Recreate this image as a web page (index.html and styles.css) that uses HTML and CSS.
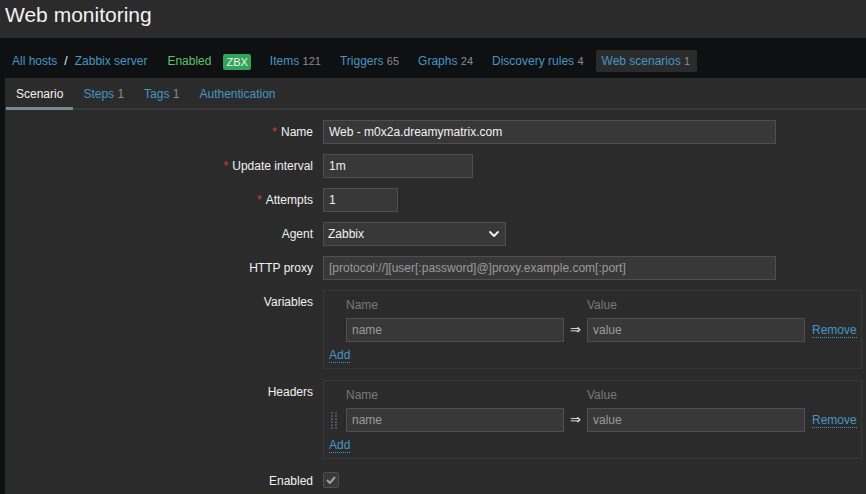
FILE: index.html
```html
<!DOCTYPE html>
<html lang="en">
<head>
<meta charset="utf-8">
<title>Web monitoring</title>
<link rel="stylesheet" href="styles.css">
</head>
<body>
<header class="page-header">
  <h1 class="page-title">Web monitoring</h1>
</header>
<nav class="host-nav">
  <ul class="host-nav-list">
    <li class="crumbs"><a class="link" href="#">All hosts</a><span class="crumb-sep">/</span><a class="link" href="#">Zabbix server</a></li>
    <li class="status">Enabled</li>
    <li class="badge-item"><span class="badge">ZBX</span></li>
    <li><a class="link" href="#">Items</a> <span class="count">121</span></li>
    <li><a class="link" href="#">Triggers</a> <span class="count">65</span></li>
    <li><a class="link" href="#">Graphs</a> <span class="count">24</span></li>
    <li><a class="link" href="#">Discovery rules</a> <span class="count">4</span></li>
    <li class="selected"><a class="link" href="#">Web scenarios</a> <span class="count">1</span></li>
  </ul>
</nav>
<main class="panel">
  <ul class="tabs">
    <li class="tab active"><span>Scenario</span></li>
    <li class="tab"><a class="link" href="#">Steps</a> <span class="count">1</span></li>
    <li class="tab"><a class="link" href="#">Tags</a> <span class="count">1</span></li>
    <li class="tab"><a class="link" href="#">Authentication</a></li>
  </ul>
  <form class="form">
    <label class="label required">Name</label>
    <div class="field"><input class="input w-wide" type="text" value="Web - m0x2a.dreamymatrix.com"></div>

    <label class="label required">Update interval</label>
    <div class="field"><input class="input w-mid" type="text" value="1m"></div>

    <label class="label required">Attempts</label>
    <div class="field"><input class="input w-small" type="text" value="1"></div>

    <label class="label">Agent</label>
    <div class="field">
      <div class="select">
        <span>Zabbix</span>
        <svg class="chevron" width="10" height="6" viewBox="0 0 10 6"><path d="M1 1 L5 5 L9 1" fill="none" stroke="#f2f2f2" stroke-width="1.8" stroke-linecap="round" stroke-linejoin="round"/></svg>
      </div>
    </div>

    <label class="label">HTTP proxy</label>
    <div class="field"><input class="input w-wide" type="text" placeholder="[protocol://][user[:password]@]proxy.example.com[:port]"></div>

    <label class="label top">Variables</label>
    <div class="field">
      <div class="pairs first">
        <div class="pairs-grid">
          <span></span><span class="col-head">Name</span><span></span><span class="col-head">Value</span><span></span>
          <span></span>
          <input class="input pair-input" type="text" placeholder="name">
          <span class="arrow">⇒</span>
          <input class="input pair-input" type="text" placeholder="value">
          <span class="remove-cell"><a class="link dotted" href="#">Remove</a></span>
        </div>
        <div class="add-row"><a class="link dotted" href="#">Add</a></div>
      </div>
    </div>

    <label class="label top">Headers</label>
    <div class="field">
      <div class="pairs">
        <div class="pairs-grid">
          <span></span><span class="col-head">Name</span><span></span><span class="col-head">Value</span><span></span>
          <span class="drag">
            <svg width="7" height="17" viewBox="0 0 7 17">
              <g fill="#4c565c">
                <rect x="0" y="0" width="2" height="2"/><rect x="4" y="0" width="2" height="2"/>
                <rect x="0" y="3" width="2" height="2"/><rect x="4" y="3" width="2" height="2"/>
                <rect x="0" y="6" width="2" height="2"/><rect x="4" y="6" width="2" height="2"/>
                <rect x="0" y="9" width="2" height="2"/><rect x="4" y="9" width="2" height="2"/>
                <rect x="0" y="12" width="2" height="2"/><rect x="4" y="12" width="2" height="2"/>
                <rect x="0" y="15" width="2" height="2"/><rect x="4" y="15" width="2" height="2"/>
              </g>
            </svg>
          </span>
          <input class="input pair-input" type="text" placeholder="name">
          <span class="arrow">⇒</span>
          <input class="input pair-input" type="text" placeholder="value">
          <span class="remove-cell"><a class="link dotted" href="#">Remove</a></span>
        </div>
        <div class="add-row"><a class="link dotted" href="#">Add</a></div>
      </div>
    </div>

    <label class="label">Enabled</label>
    <div class="field">
      <span class="checkbox">
        <svg width="10" height="8" viewBox="0 0 10 8"><path d="M1 4 L4 7 L9 1" fill="none" stroke="#9ba3a8" stroke-width="2"/></svg>
      </span>
    </div>
  </form>
</main>
</body>
</html>
```

FILE: styles.css
```css
* { box-sizing: border-box; }

html, body {
  margin: 0;
  padding: 0;
}

body {
  background: #0e1012;
  color: #f2f2f2;
  font-family: "Liberation Sans", Arial, sans-serif;
  font-size: 12px;
  line-height: 14px;
  overflow: hidden;
  height: 494px;
}

ul { list-style: none; margin: 0; padding: 0; }

.link {
  color: #4796c4;
  text-decoration: none;
}

.count {
  color: #8c8c8c;
}

/* Header */
.page-header {
  height: 38px;
  background: #2b2b2b;
  padding: 3px 0 0 5px;
}

.page-title {
  margin: 0;
  font-size: 21px;
  font-weight: normal;
  line-height: 24px;
  color: #f2f2f2;
}

/* Host navigation */
.host-nav {
  height: 40px;
  padding: 12px 0 6px 12px;
}

.host-nav-list {
  display: flex;
  align-items: center;
  height: 22px;
  line-height: 22px;
}

.host-nav-list li {
  margin-right: 19px;
  white-space: nowrap;
}

.host-nav-list .count {
  font-size: 11px;
}

.host-nav-list li.crumbs { margin-right: 20px; }
.host-nav-list li.status { margin-right: 12px; color: #5bc56a; }

.crumb-sep {
  color: #f2f2f2;
  margin: 0 7px;
}

.badge {
  display: inline-block;
  background: #2ea55a;
  color: #f2f2f2;
  font-size: 11px;
  line-height: 16px;
  height: 16px;
  padding: 0 3px;
  border-radius: 2px;
  vertical-align: middle;
}

.host-nav-list li.selected {
  background: #2b2b2b;
  padding: 0 7px 0 6px;
  margin-left: -7px;
  border-radius: 2px;
}

/* Panel */
.panel {
  margin-left: 5px;
  background: #2b2b2b;
  height: 416px;
}

.tabs {
  display: flex;
  height: 32px;
  box-shadow: inset 0 -2px 0 #383838;
  padding-left: 1px;
}

.tab {
  height: 32px;
  padding: 9px 10px 0;
  border-bottom: 3px solid transparent;
  white-space: nowrap;
}

.tab.active {
  border-bottom-color: #768d99;
  color: #f2f2f2;
}

/* Form */
.form {
  display: grid;
  grid-template-columns: 308px 1fr;
  column-gap: 10px;
  row-gap: 10px;
  padding-top: 10px;
}

.label {
  text-align: right;
  line-height: 24px;
  color: #f2f2f2;
}

.label.required::before {
  content: "*";
  color: #d3403b;
  margin-right: 4px;
}

.field {
  min-height: 24px;
}

.input {
  height: 24px;
  background: #383838;
  border: 1px solid #4f4f4f;
  color: #f2f2f2;
  font-family: "Liberation Sans", Arial, sans-serif;
  font-size: 12px;
  padding: 0 5px;
  margin: 0;
  outline: none;
  border-radius: 0;
  display: block;
}

.input::placeholder { color: #9a9a9a; opacity: 1; }

.w-wide { width: 453px; }
.w-mid { width: 150px; }
.w-small { width: 75px; }

.select {
  width: 183px;
  height: 24px;
  background: #383838;
  border: 1px solid #4f4f4f;
  display: flex;
  align-items: center;
  justify-content: space-between;
  padding: 0 5px 0 4px;
  line-height: 22px;
}

.chevron { margin-right: 1px; }

/* Dynamic rows box */
.pairs {
  width: 539px;
  height: 79px;
  border: 1px solid #383838;
  padding: 5px 5px 6px 5px;
}

.pairs.first {
  margin-bottom: 1px;
}

.pairs-grid {
  display: grid;
  grid-template-columns: 17px 218px 23px 218px 1fr;
  grid-template-rows: 16px 24px;
  row-gap: 6px;
  align-items: center;
}

.col-head {
  color: #7a7a7a;
  line-height: 14px;
  padding-top: 1px;
}

.pair-input { width: 218px; }

.arrow {
  font-family: "DejaVu Sans", sans-serif;
  font-size: 13px;
  text-align: center;
  color: #f2f2f2;
}

.remove-cell {
  padding-left: 7px;
}

.dotted {
  display: inline-block;
  line-height: 13px;
  border-bottom: 1px dotted #4796c4;
}

.add-row {
  margin-top: 6px;
  height: 14px;
}

.drag {
  display: flex;
  padding-left: 2px;
  align-items: center;
}

.drag svg { display: block; }

.checkbox {
  margin-top: 3px;
  width: 16px;
  height: 16px;
  border: 1px solid #4f4f4f;
  background: #383838;
  display: flex;
  align-items: center;
  justify-content: center;
  border-radius: 2px;
}
```
